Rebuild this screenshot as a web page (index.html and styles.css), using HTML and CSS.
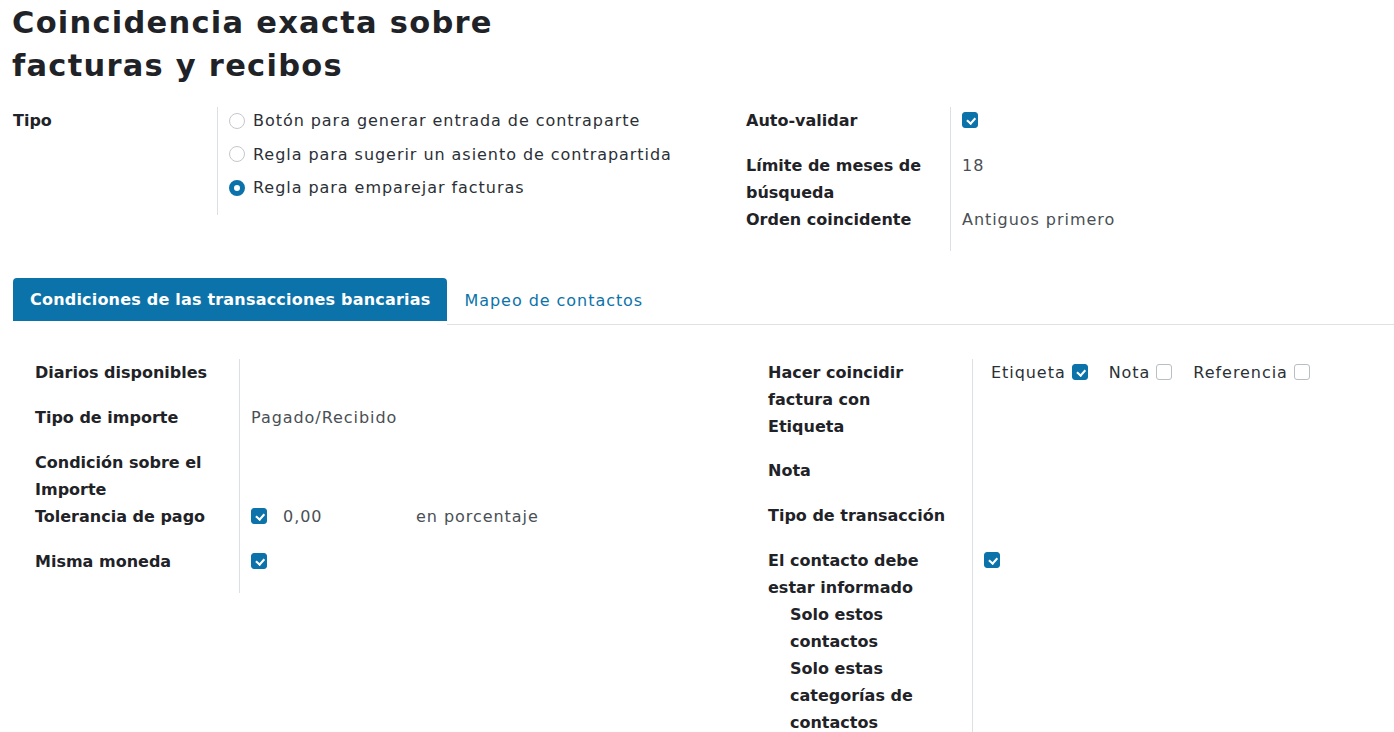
FILE: index.html
```html
<!DOCTYPE html>
<html lang="es">
<head>
<meta charset="utf-8">
<title>Coincidencia exacta sobre facturas y recibos</title>
<link rel="stylesheet" href="styles.css">
</head>
<body>
<div class="sheet">
  <h1 class="title">Coincidencia exacta sobre<br>facturas y recibos</h1>

  <div class="top-groups">
    <div class="group">
      <div class="lbl">Tipo</div>
      <div class="val val-radios">
        <label class="radio"><span class="rb"></span>Botón para generar entrada de contraparte</label>
        <label class="radio"><span class="rb"></span>Regla para sugerir un asiento de contrapartida</label>
        <label class="radio"><span class="rb on"></span>Regla para emparejar facturas</label>
      </div>
    </div>
    <div class="group">
      <div class="lbl">Auto-validar</div>
      <div class="val pad"><span class="cb on"></span></div>
      <div class="lbl">Límite de meses de<br>búsqueda</div>
      <div class="val pad">18</div>
      <div class="lbl">Orden coincidente</div>
      <div class="val pad">Antiguos primero</div>
    </div>
  </div>

  <div class="tabs">
    <div class="tab active">Condiciones de las transacciones bancarias</div>
    <div class="tab">Mapeo de contactos</div>
    <div class="tab-fill"></div>
  </div>

  <div class="tab-body">
    <div class="group">
      <div class="lbl">Diarios disponibles</div>
      <div class="val pad"></div>
      <div class="lbl">Tipo de importe</div>
      <div class="val pad">Pagado/Recibido</div>
      <div class="lbl">Condición sobre el<br>Importe</div>
      <div class="val"></div>
      <div class="lbl">Tolerancia de pago</div>
      <div class="val pad tol"><span class="cb on"></span><span class="num">0,00</span><span class="unit">en porcentaje</span></div>
      <div class="lbl">Misma moneda</div>
      <div class="val pad"><span class="cb on"></span></div>
    </div>
    <div class="group">
      <div class="lbl lbl-tall">Hacer coincidir<br>factura con<br>Etiqueta</div>
      <div class="val match">
        <span class="opt">Etiqueta <span class="cb on"></span></span>
        <span class="opt">Nota <span class="cb"></span></span>
        <span class="opt">Referencia <span class="cb"></span></span>
      </div>
      <div class="lbl">Nota</div>
      <div class="val pad"></div>
      <div class="lbl">Tipo de transacción</div>
      <div class="val pad"></div>
      <div class="lbl">El contacto debe<br>estar informado</div>
      <div class="val"><span class="cb on"></span></div>
      <div class="lbl sub">Solo estos<br>contactos</div>
      <div class="val"></div>
      <div class="lbl sub">Solo estas<br>categorías de<br>contactos</div>
      <div class="val"></div>
    </div>
  </div>
</div>
</body>
</html>
```
FILE: styles.css
```css
* { box-sizing: border-box; }

html, body {
  margin: 0;
  padding: 0;
  background: #ffffff;
}

body {
  font-family: "DejaVu Sans", "Open Sans", sans-serif;
  font-size: 16px;
  line-height: 27px;
  letter-spacing: 0.95px;
  color: #212529;
  overflow: hidden;
}

.sheet {
  padding: 0 0 0 13px;
}

.title {
  margin: 0;
  font-size: 30.5px;
  line-height: 43px;
  font-weight: 700;
  letter-spacing: 1.25px;
  color: #1f2328;
  margin-left: -1px;
  padding-top: 1px;
}

.top-groups {
  display: grid;
  grid-template-columns: 733px 1fr;
  margin-top: 20px;
}

.group {
  display: grid;
  grid-template-columns: 204px 1fr;
  align-content: start;
}

.lbl {
  font-weight: 700;
  letter-spacing: 0;
  color: #1f2328;
  padding-right: 6px;
  white-space: nowrap;
}

.lbl.sub {
  padding-left: 22px;
}

.lbl-tall {
  padding-bottom: 17px;
}

.val {
  border-left: 1px solid #dcdfe3;
  padding-left: 11px;
  color: #4a4f55;
  min-height: 27px;
}

.val.pad {
  min-height: 45px;
  padding-bottom: 18px;
}

.val-radios {
  display: flex;
  flex-direction: column;
  gap: 6.5px;
  padding-bottom: 13.5px;
}

.radio {
  display: flex;
  align-items: center;
  gap: 8px;
  color: #2b3036;
}

.rb {
  width: 16px;
  height: 16px;
  border-radius: 50%;
  border: 1px solid #c4c8cc;
  background: #fff;
  flex: none;
}

.rb.on {
  border: 5px solid #0c73aa;
  background: #fff;
}

.cb {
  display: inline-block;
  width: 16px;
  height: 16px;
  border-radius: 3px;
  border: 1px solid #b9bec3;
  background: #fff;
  vertical-align: -2px;
  position: relative;
}

.cb.on {
  background: #0c73aa;
  border-color: #0c73aa;
}

.cb.on::after {
  content: "";
  position: absolute;
  left: 4px;
  top: 3.5px;
  width: 6px;
  height: 3.5px;
  border-left: 2px solid #fff;
  border-bottom: 2px solid #fff;
  transform: rotate(-48deg);
}

.tol {
  display: flex;
  align-items: flex-start;
}

.tol .cb {
  margin-top: 5px;
}

.tol .num {
  margin-left: 16px;
  width: 133px;
}

.match {
  display: flex;
  gap: 21px;
  padding-left: 18px;
}

.match .opt {
  color: #2b3036;
}

.match .cb {
  margin-left: 0;
}

.tabs {
  display: flex;
  margin-top: 27px;
  height: 47px;
}

.tab {
  height: 43px;
  line-height: 43px;
  padding: 0 17px;
  color: #0c73aa;
}

.tab.active {
  background: #0c73aa;
  color: #ffffff;
  font-weight: 700;
  letter-spacing: 0.2px;
  border-radius: 4px 4px 0 0;
}

.tabs .tab:nth-child(2) {
  height: 47px;
  padding-top: 1px;
  border-bottom: 1px solid #dee2e6;
}

.tab-fill {
  flex: 1;
  border-bottom: 1px solid #dee2e6;
}

.tab-body {
  display: grid;
  grid-template-columns: 733px 1fr;
  padding-left: 22px;
  padding-top: 34px;
}
```
